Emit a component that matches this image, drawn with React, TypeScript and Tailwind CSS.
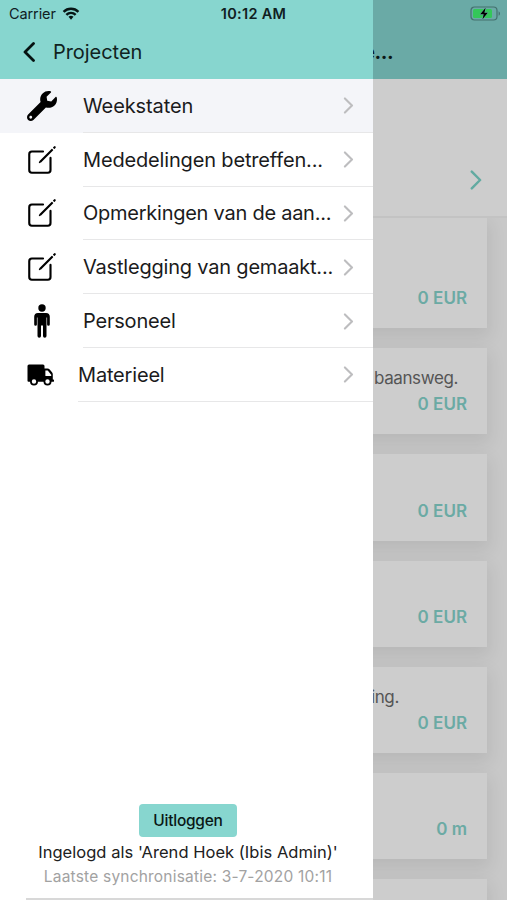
import type { ReactNode } from 'react'
import { FaWrench } from 'react-icons/fa'
import { IoCreateOutline } from 'react-icons/io5'

interface MenuItem {
  label: string
  icon: ReactNode
  spacing: string
  active?: boolean
  narrow?: boolean
}

function PersonIcon() {
  return (
    <svg viewBox="0 0 16 34" className="h-[34px] w-4" fill="#000">
      <circle cx="8" cy="4" r="3.7" />
      <path d="M4 9h8a3.8 3.8 0 0 1 3.800 3.800V20.400a1.350 1.350 0 0 1-2.700 0V13.500h-.6V31.900a1.750 1.750 0 0 1-3.500 0V21.500H7v10.400a1.750 1.750 0 0 1-3.500 0V13.500h-.6v6.900a1.350 1.350 0 0 1-2.700 0V12.800A3.800 3.800 0 0 1 4 9z" />
    </svg>
  )
}

function TruckIcon() {
  return (
    <svg viewBox="0 0 27 22" className="mr-[3px] h-[22px] w-[27px]" fill="#000">
      <path d="M2 .5h14a1.500 1.500 0 0 1 1.500 1.500v2.500h2.900a3 3 0 0 1 2.300 1l2.300 2.800a3 3 0 0 1 .8 2v5.200h.3a.9.9 0 0 1 0 2.300H1.500A1 1 0 0 1 .5 16.800V2A1.500 1.500 0 0 1 2 .5z" />
      <path d="M18.400 6.400h2.300l3.500 4.300v1.200h-5.800z" fill="#fff" />
      <circle cx="7" cy="17.500" r="3.100" fill="#fff" stroke="#000" strokeWidth="1.800" />
      <circle cx="20.500" cy="17.500" r="3.100" fill="#fff" stroke="#000" strokeWidth="1.800" />
    </svg>
  )
}

const MENU_ITEMS: MenuItem[] = [
  { label: 'Weekstaten', icon: <FaWrench size={30} />, spacing: 'tracking-[-0.1px]', active: true },
  { label: 'Mededelingen betreffen...', icon: <IoCreateOutline size={34} />, spacing: 'tracking-[-0.16px]' },
  { label: 'Opmerkingen van de aan...', icon: <IoCreateOutline size={34} />, spacing: 'tracking-[-0.25px]' },
  { label: 'Vastlegging van gemaakt...', icon: <IoCreateOutline size={34} />, spacing: 'tracking-[-0.2px]' },
  { label: 'Personeel', icon: <PersonIcon />, spacing: 'tracking-[-0.2px]' },
  { label: 'Materieel', icon: <TruckIcon />, spacing: 'tracking-[-0.18px]', narrow: true },
]

const CARDS = [
  { text: '', amount: '0 EUR', indent: 'pl-[354px]' },
  { text: 'baansweg.', amount: '0 EUR', indent: 'pl-[354px]' },
  { text: '', amount: '0 EUR', indent: 'pl-[354px]' },
  { text: '', amount: '0 EUR', indent: 'pl-[354px]' },
  { text: 'ing.', amount: '0 EUR', indent: 'pl-[351px]' },
  { text: '', amount: '0 m', indent: 'pl-[354px]' },
  { text: '', amount: '', indent: 'pl-[354px]' },
]

function Chevron({ className }: { className: string }) {
  return (
    <svg viewBox="0 0 10 18" fill="none" stroke="currentColor" strokeWidth="2.2" className={className}>
      <path d="M1.200 1.500 8.700 9l-7.500 7.500" strokeLinecap="round" strokeLinejoin="round" />
    </svg>
  )
}

function StatusBar() {
  return (
    <div className="absolute inset-x-0 top-0 z-20 grid h-7 grid-cols-3 items-center pr-[6px] pl-[9px] text-[#10201f]">
      <div className="flex items-center gap-[6px] text-[14.5px]">
        <span className="tracking-[-0.1px]">Carrier</span>
        <svg viewBox="0 0 18 14" className="-mt-px h-[13px] w-[18px]" fill="none" stroke="#061514" strokeWidth="2.6">
          <path d="M1 5.2a11.4 11.4 0 0 1 16 0" />
          <path d="M4 8.4a7.1 7.1 0 0 1 10 0" />
          <path d="m9 13.6-2.7-3a3.9 3.9 0 0 1 5.4 0z" fill="#061514" stroke="none" />
        </svg>
      </div>
      <span className="-ml-[3px] text-center text-[14.5px] font-semibold tracking-[0.3px] whitespace-nowrap">10:12 AM</span>
      <svg viewBox="0 0 31 15" className="-mt-px h-[15px] w-[31px] justify-self-end">
        <rect x="1" y="1" width="26" height="13" rx="3.5" fill="none" stroke="#44706d" strokeWidth="1.2" />
        <rect x="3" y="3" width="19" height="9" rx="1.5" fill="#34c759" />
        <path d="M28.6 5.2v4.6c1.900-.8 1.900-3.800 0-4.600z" fill="#44706d" />
        <path
          d="m15.600 1.800-5.400 6.500h3.500l-1.200 4.900 5.300-6.500h-3.400z"
          fill="#000"
          stroke="#6aaaa6"
          strokeWidth="1"
          paintOrder="stroke"
        />
      </svg>
    </div>
  )
}

function ProjectPage() {
  return (
    <main className="flex h-full flex-col overflow-hidden bg-[#c8c8c8]">
      <header className="flex h-[79px] shrink-0 items-end bg-[#6aaaa6] pb-[13px] pl-[363px]">
        <h1 className="text-[20px] leading-7 font-bold tracking-[-0.4px] text-[#0a1716]">e...</h1>
      </header>
      <section className="flex h-[139px] shrink-0 items-end justify-end border-b-2 border-[#c3c3c3] bg-[#cdcdcd] pr-[25px] pb-[26px]">
        <Chevron className="h-[20px] w-[12px] text-[#62aaa1]" />
      </section>
      <div className="flex flex-col gap-5 overflow-hidden px-5">
        {CARDS.map((card, i) => (
          <article
            key={i}
            className={`flex shrink-0 flex-col justify-end bg-[#cdcdcd] pr-5 pb-[17px] shadow-[0_7px_16px_3px_rgba(0,0,0,0.08)] ${
              i === 0 ? 'h-[110px]' : 'h-[86.3px]'
            } ${card.indent}`}
          >
            <p className="mb-px text-[17px] leading-[26px] tracking-[-0.4px] text-[#555]">{card.text}</p>
            <p className="text-right text-[17px] leading-[25px] font-semibold text-[#6baaa4]">{card.amount}</p>
          </article>
        ))}
      </div>
    </main>
  )
}

function Drawer() {
  return (
    <aside className="absolute inset-y-0 left-0 z-10 flex w-[373px] flex-col bg-white">
      <header className="flex h-[79px] items-end bg-[#87d6cf] pb-[13px] pl-[23px] text-[#102321]">
        <svg viewBox="0 0 12 20" className="mb-1 h-5 w-3" fill="none" stroke="#061211" strokeWidth="2.8">
          <path d="M10.5 1.5 2 10l8.5 8.5" strokeLinecap="round" strokeLinejoin="round" />
        </svg>
        <span className="ml-[18px] text-[20px] leading-7 tracking-[-0.05px]">Projecten</span>
      </header>
      <nav className="flex-1">
        {MENU_ITEMS.map((item) => (
          <div
            key={item.label}
            className={`flex h-[53.8px] items-center ${item.active ? 'bg-[#f4f5f9]' : ''}`}
          >
            <div
              className={`flex h-full shrink-0 items-center pl-[26px] text-black ${
                item.narrow ? 'w-[78px]' : 'w-[83px]'
              }`}
            >
              <div className="flex w-8 justify-center [&>svg]:shrink-0">{item.icon}</div>
            </div>
            <div className="flex h-full min-w-0 flex-1 items-center justify-between border-b border-[#e7e7e8] pt-px pr-[19px]">
              <span className={`text-[20px] whitespace-nowrap text-[#1b1b1c] ${item.spacing}`}>{item.label}</span>
              <Chevron className="h-[17px] w-[11px] shrink-0 text-[#bdbdbf]" />
            </div>
          </div>
        ))}
      </nav>
      <footer className="flex flex-col items-center pl-[3px]">
        <button className="h-[33px] w-[98px] rounded-[4px] bg-[#87d6cf] text-[15.5px] font-medium tracking-[-0.25px] text-[#0a1716]">
          Uitloggen
        </button>
        <p className="mt-[2px] text-[16.5px] leading-[26px] tracking-[0.03px] text-[#202021]">
          Ingelogd als 'Arend Hoek (Ibis Admin)'
        </p>
        <p className="text-[15.5px] leading-6 tracking-[0.2px] text-[#a2a2a2]">Laatste synchronisatie: 3-7-2020 10:11</p>
        <div className="mt-[9px] h-[2px] w-[347px] self-end bg-[#d8d8d8]" />
      </footer>
    </aside>
  )
}

export default function App() {
  return (
    <div className="relative h-[900px] w-[507px] overflow-hidden font-['Inter','Liberation_Sans',sans-serif]">
      <ProjectPage />
      <Drawer />
      <StatusBar />
    </div>
  )
}
